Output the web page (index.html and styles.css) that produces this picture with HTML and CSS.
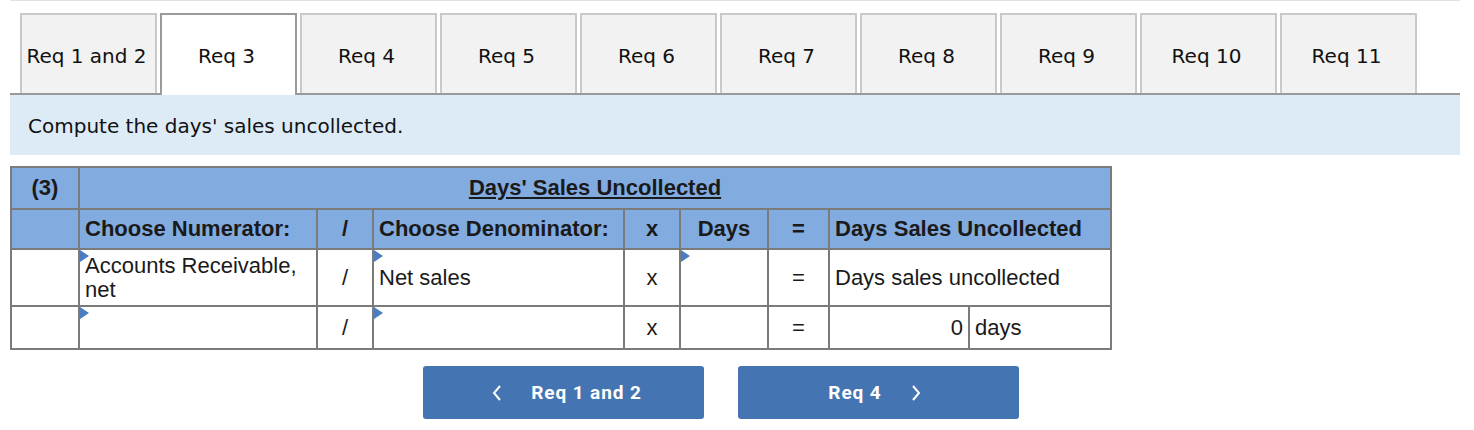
FILE: index.html
```html
<!DOCTYPE html>
<html>
<head>
<meta charset="utf-8">
<link rel="stylesheet" href="styles.css">
</head>
<body>
<div class="page">
  <div class="toprule"></div>
  <div class="tabs">
    <div class="tab">Req 1 and 2</div>
    <div class="tab active">Req 3</div>
    <div class="tab">Req 4</div>
    <div class="tab">Req 5</div>
    <div class="tab">Req 6</div>
    <div class="tab">Req 7</div>
    <div class="tab">Req 8</div>
    <div class="tab">Req 9</div>
    <div class="tab">Req 10</div>
    <div class="tab">Req 11</div>
  </div>
  <div class="instr">Compute the days' sales uncollected.</div>
  <table class="grid">
    <colgroup>
      <col class="c1"><col class="c2"><col class="c3"><col class="c4"><col class="c5"><col class="c6"><col class="c7"><col class="c8"><col class="c9">
    </colgroup>
    <tr class="h1">
      <th class="center">(3)</th>
      <th colspan="8" class="center"><u>Days' Sales Uncollected</u></th>
    </tr>
    <tr class="h2">
      <th></th>
      <th class="left">Choose Numerator:</th>
      <th class="center">/</th>
      <th class="left">Choose Denominator:</th>
      <th class="center">x</th>
      <th class="center">Days</th>
      <th class="center">=</th>
      <th colspan="2" class="left">Days Sales Uncollected</th>
    </tr>
    <tr class="r1">
      <td></td>
      <td class="sel"><span class="tri"></span><div class="wrap">Accounts Receivable, net</div></td>
      <td class="center">/</td>
      <td class="sel"><span class="tri"></span>Net sales</td>
      <td class="center">x</td>
      <td class="sel"><span class="tri"></span></td>
      <td class="center">=</td>
      <td colspan="2" class="left">Days sales uncollected</td>
    </tr>
    <tr class="r2">
      <td></td>
      <td class="sel"><span class="tri"></span></td>
      <td class="center">/</td>
      <td class="sel"><span class="tri"></span></td>
      <td class="center">x</td>
      <td></td>
      <td class="center">=</td>
      <td class="right">0</td>
      <td class="left">days</td>
    </tr>
  </table>
  <div class="nav">
    <button class="btn prev"><svg class="chev" width="10" height="16" viewBox="0 0 10 16"><path d="M8 1 L2 8 L8 15" fill="none" stroke="#fff" stroke-width="2"/></svg><span>Req 1 and 2</span></button>
    <button class="btn next"><span>Req 4</span><svg class="chev" width="10" height="16" viewBox="0 0 10 16"><path d="M2 1 L8 8 L2 15" fill="none" stroke="#fff" stroke-width="2"/></svg></button>
  </div>
</div>
</body>
</html>
```
FILE: styles.css
```css
html, body {
  margin: 0;
  padding: 0;
  background: #fff;
}
.page {
  padding: 0 0 0 10px;
  font-family: "DejaVu Sans", Verdana, sans-serif;
  color: #111;
}
.toprule {
  width: 1450px;
  border-top: 1px solid #e2e2e2;
}
.tabs {
  display: flex;
  gap: 3px;
  margin-top: 12px;
  padding-left: 10px;
  align-items: flex-start;
}
.tab {
  box-sizing: border-box;
  width: 137px;
  height: 80px;
  border: 2px solid #c9c9c9;
  border-bottom: none;
  background: #f2f2f2;
  display: flex;
  align-items: center;
  justify-content: center;
  font-size: 20px;
  padding-top: 4px;
  padding-right: 4px;
}
.tab.active {
  background: #fff;
  border-color: #9a9a9a;
  height: 82px;
  margin-bottom: -2px;
  padding-bottom: 2px;
  position: relative;
  z-index: 1;
}
.instr {
  box-sizing: border-box;
  width: 1450px;
  height: 62px;
  border-top: 2px solid #9a9a9a;
  background: #ddebf7;
  font-size: 20px;
  padding-left: 18px;
  display: flex;
  align-items: center;
  padding-top: 2px;
}
.grid {
  margin-top: 11px;
  border-collapse: collapse;
  font-family: "Liberation Sans", Arial, sans-serif;
  font-size: 22px;
  color: #1a1a1a;
  table-layout: fixed;
  width: 1100px;
}
.grid th, .grid td {
  border: 2px solid #7b7b7b;
  padding: 0 5px;
}
.c1 { width: 68px; }
.c2 { width: 238px; }
.c3 { width: 56px; }
.c4 { width: 251px; }
.c5 { width: 56px; }
.c6 { width: 88px; }
.c7 { width: 61px; }
.c8 { width: 140px; }
.c9 { width: 142px; }
.h1 th, .h2 th {
  background: #82abdf;
  font-weight: bold;
}
.h1 { height: 42px; }
.h2 { height: 40px; }
.r1 { height: 57px; }
.r2 { height: 43px; }
.center { text-align: center; }
.left { text-align: left; }
.right { text-align: right; }
.sel {
  position: relative;
  text-align: left;
}
.tri {
  position: absolute;
  left: 0;
  top: 0;
  width: 0;
  height: 0;
  border-top: 6px solid transparent;
  border-bottom: 6px solid transparent;
  border-left: 9px solid #4b7dc0;
}
.wrap {
  line-height: 24px;
  padding-top: 1px;
}
.r1 td { vertical-align: middle; }
.nav {
  display: flex;
  gap: 34px;
  margin-top: 16px;
  margin-left: 413px;
}
.btn {
  box-sizing: border-box;
  width: 281px;
  height: 53px;
  background: #4574b3;
  border: none;
  border-radius: 3px;
  color: #fff;
  font-family: Roboto, "Liberation Sans", sans-serif;
  font-weight: bold;
  font-size: 19px;
  letter-spacing: 0.9px;
  display: flex;
  align-items: center;
  justify-content: center;
  gap: 29px;
  padding: 0;
}
.btn.prev { padding-left: 7px; }
.btn.next { padding-right: 8px; }
.chev { display: block; }
```
